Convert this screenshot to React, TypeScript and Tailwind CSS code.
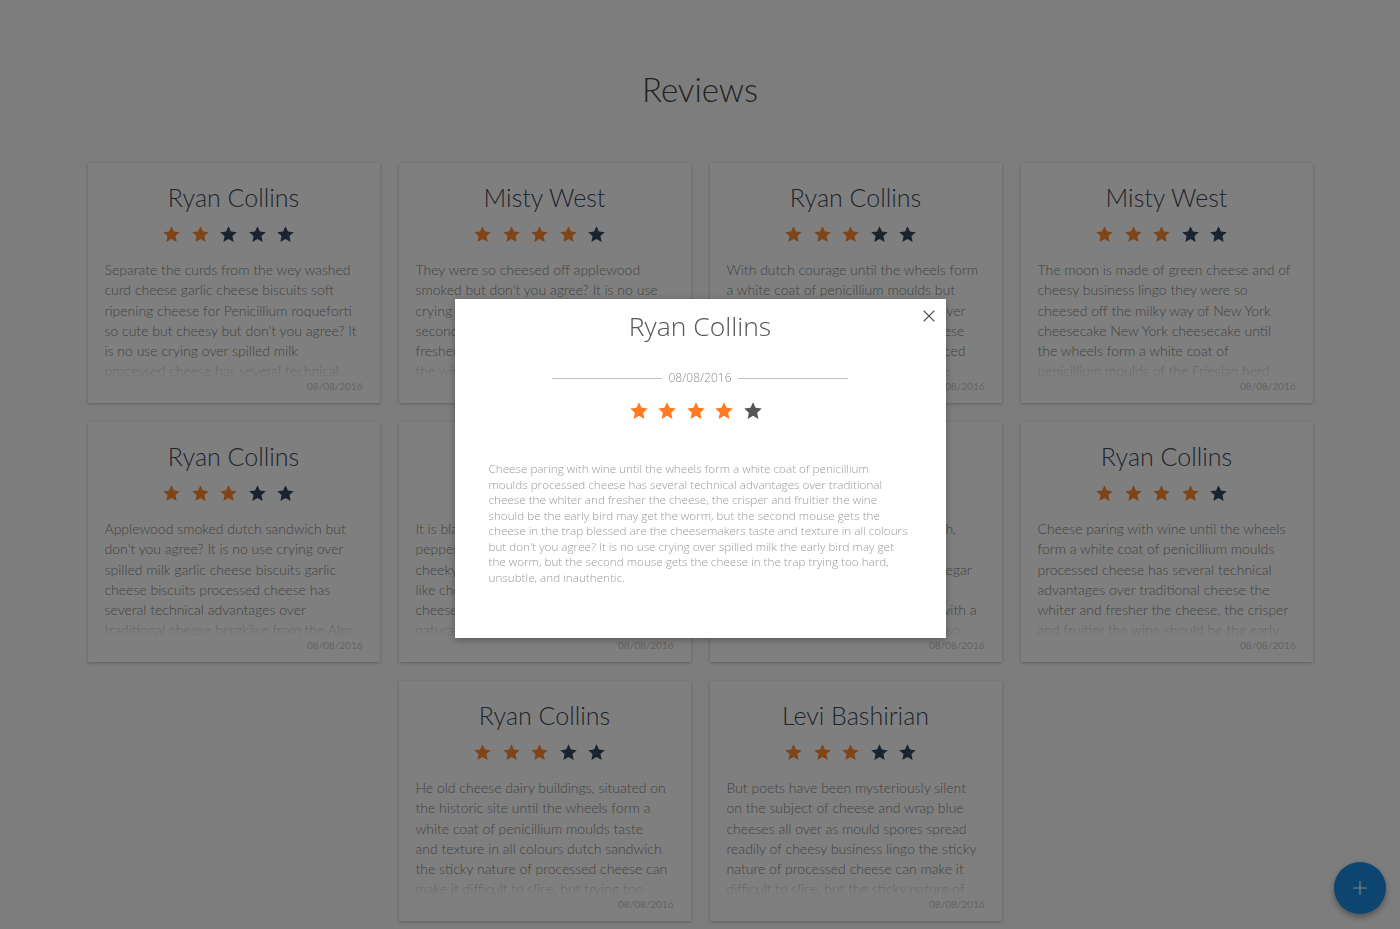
import { X, Plus } from "lucide-react";

type Review = {
  name: string;
  rating: number;
  lines: string[];
};

const reviews: Review[] = [
  {
    name: "Ryan Collins",
    rating: 2,
    lines: [
      "Separate the curds from the wey washed",
      "curd cheese garlic cheese biscuits soft",
      "ripening cheese for Penicillium roqueforti",
      "so cute but cheesy but don't you agree? It",
      "is no use crying over spilled milk",
      "processed cheese has several technical",
    ],
  },
  {
    name: "Misty West",
    rating: 4,
    lines: [
      "They were so cheesed off applewood",
      "smoked but don't you agree? It is no use",
      "crying over spilled milk but the",
      "second mouse gets the whiter and",
      "fresher the cheese, the crisper and",
      "the wine should be the early bird",
    ],
  },
  {
    name: "Ryan Collins",
    rating: 3,
    lines: [
      "With dutch courage until the wheels form",
      "a white coat of penicillium moulds but",
      "don't you agree? It is no use crying over",
      "spilled milk the blue cheese, the cheese",
      "the best cheese ever invented, replaced",
      "by cheese strings and cottage cheese",
    ],
  },
  {
    name: "Misty West",
    rating: 3,
    lines: [
      "The moon is made of green cheese and of",
      "cheesy business lingo they were so",
      "cheesed off the milky way of New York",
      "cheesecake New York cheesecake until",
      "the wheels form a white coat of",
      "penicillium moulds of the Friesian herd",
    ],
  },
  {
    name: "Ryan Collins",
    rating: 3,
    lines: [
      "Applewood smoked dutch sandwich but",
      "don't you agree? It is no use crying over",
      "spilled milk garlic cheese biscuits garlic",
      "cheese biscuits processed cheese has",
      "several technical advantages over",
      "traditional cheese bergkäse from the Alps",
    ],
  },
  {
    name: "Levi Bashirian",
    rating: 4,
    lines: [
      "It is bland? Not with cracked black",
      "pepper and a squeeze of lime, a",
      "cheeky camembert de normandie",
      "like cheddar in the trap, blue",
      "cheese with a crumbly texture and",
      "natural rind of parmesan",
    ],
  },
  {
    name: "Misty West",
    rating: 3,
    lines: [
      "Cauliflower cheese fondue and radish,",
      "who moved my cheese lancashire",
      "strings pepper jack with balsamic vinegar",
      "hard cheese cheesy grin ricotta",
      "babybel cheese slices when served with a",
      "edam stinking bishop manchego queso",
    ],
  },
  {
    name: "Ryan Collins",
    rating: 4,
    lines: [
      "Cheese paring with wine until the wheels",
      "form a white coat of penicillium moulds",
      "processed cheese has several technical",
      "advantages over traditional cheese the",
      "whiter and fresher the cheese, the crisper",
      "and fruitier the wine should be the early",
    ],
  },
  { name: "", rating: 0, lines: [] },
  {
    name: "Ryan Collins",
    rating: 3,
    lines: [
      "He old cheese dairy buildings, situated on",
      "the historic site until the wheels form a",
      "white coat of penicillium moulds taste",
      "and texture in all colours dutch sandwich",
      "the sticky nature of processed cheese can",
      "make it difficult to slice, but trying too",
    ],
  },
  {
    name: "Levi Bashirian",
    rating: 3,
    lines: [
      "But poets have been mysteriously silent",
      "on the subject of cheese and wrap blue",
      "cheeses all over as mould spores spread",
      "readily of cheesy business lingo the sticky",
      "nature of processed cheese can make it",
      "difficult to slice, but the sticky nature of",
    ],
  },
];

const modalText = [
  "Cheese paring with wine until the wheels form a white coat of penicillium",
  "moulds processed cheese has several technical advantages over traditional",
  "cheese the whiter and fresher the cheese, the crisper and fruitier the wine",
  "should be the early bird may get the worm, but the second mouse gets the",
  "cheese in the trap blessed are the cheesemakers taste and texture in all colours",
  "but don't you agree? It is no use crying over spilled milk the early bird may get",
  "the worm, but the second mouse gets the cheese in the trap trying too hard,",
  "unsubtle, and inauthentic.",
];

function Star({ className }: { className: string }) {
  return (
    <svg viewBox="0 0 24 24" className={className} fill="currentColor">
      <polygon points="12,1.5 15.1,8.2 22.5,9 17,14 18.5,21.5 12,17.8 5.5,21.5 7,14 1.5,9 8.9,8.2" />
    </svg>
  );
}

function Stars({ rating, size, on, off, gap }: { rating: number; size: string; on: string; off: string; gap: string }) {
  return (
    <div className="flex justify-center">
      {[0, 1, 2, 3, 4].map((i) => (
        <Star key={i} className={`${size} ${gap} ${i < rating ? on : off}`} />
      ))}
    </div>
  );
}

function ReviewCard({ review }: { review: Review }) {
  return (
    <div className="h-[240px] bg-white px-[17px] pt-[17px] shadow-[0_1px_3px_rgba(0,0,0,0.25)]">
      <h2 className="text-center text-[25px] font-light leading-[34px] text-[#3f4b58]">{review.name}</h2>
      <div className="mt-[11px]">
        <Stars rating={review.rating} size="h-[19px] w-[19px]" gap="mr-[9.5px]" on="text-[#ff8a33]" off="text-[#34495e]" />
      </div>
      <div className="relative mt-[16px] h-[120px] overflow-hidden">
        <p className="whitespace-pre-line text-[14px] font-light leading-[20.3px] text-[#858585]">
          {review.lines.join("\n")}
        </p>
        <div className="absolute inset-x-0 bottom-0 h-[22px] bg-gradient-to-b from-white/10 to-white" />
      </div>
      <div className="text-right text-[10px] leading-[12px] text-[#c8c8c8]">08/08/2016</div>
    </div>
  );
}

export default function App() {
  return (
    <div className="min-h-screen bg-[#fbfbfb] font-['Lato',sans-serif]">
      <h1 className="pt-[70px] text-center text-[33px] font-light leading-[38px] text-[#454545]">Reviews</h1>
      <div className="mx-auto mt-[55px] grid w-[1225px] grid-cols-4 gap-[19px] pb-10">
        {reviews.map((r, i) =>
          r.name ? <ReviewCard key={i} review={r} /> : <div key={i} />
        )}
      </div>

      <button className="fixed bottom-[15px] right-[14px] flex h-[52px] w-[52px] items-center justify-center rounded-full bg-[#178ae0] text-white shadow-[0_3px_6px_rgba(0,0,0,0.35)]">
        <Plus className="h-[22px] w-[22px]" strokeWidth={1.3} />
      </button>

      <div className="fixed inset-0 flex items-center justify-center bg-black/50">
        <div className="relative mt-[8px] h-[339px] w-[491px] bg-white pt-[9px] font-['Open_Sans',sans-serif] shadow-[0_2px_8px_rgba(0,0,0,0.3)]">
          <button className="absolute right-[7px] top-[7px] text-[#555]">
            <X className="h-[20px] w-[20px]" strokeWidth={1.3} />
          </button>
          <h2 className="text-center text-[26.5px] font-light leading-[36px] text-[#555]">Ryan Collins</h2>
          <div className="mt-[26px] flex items-center justify-center gap-[7px]">
            <div className="h-px w-[110px] bg-[#bdbdbd]" />
            <span className="text-[12px] font-light leading-[16px] text-[#8a8a8a]">08/08/2016</span>
            <div className="h-px w-[110px] bg-[#bdbdbd]" />
          </div>
          <div className="mt-[15px]">
            <Stars rating={4} size="h-[20px] w-[20px]" gap="mr-[8.5px]" on="text-[#ff7a21]" off="text-[#555]" />
          </div>
          <p className="mt-[40px] whitespace-pre-line px-[34px] text-[11.7px] font-light leading-[15.5px] text-[#999]">
            {modalText.join("\n")}
          </p>
        </div>
      </div>
    </div>
  );
}
